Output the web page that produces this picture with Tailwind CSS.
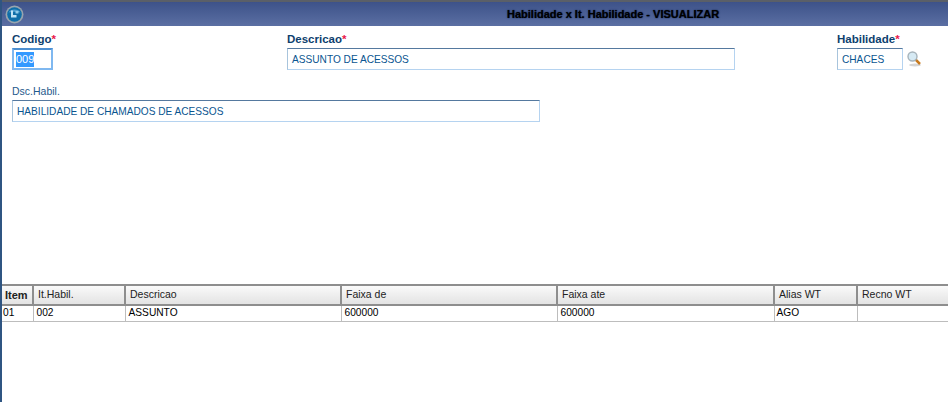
<!DOCTYPE html>
<html>
<head>
<meta charset="utf-8">
<script src="https://cdn.jsdelivr.net/npm/@tailwindcss/browser@4"></script>
</head>
<body class="m-0 bg-white">
<div class="w-[948px] h-[402px] overflow-hidden flex flex-col bg-white border-l-2 border-[#2f5582] font-['Liberation_Sans',Arial,sans-serif] text-[11px]">
  <header class="h-[26px] shrink-0 flex items-center relative border-t-2 border-[#5a5f68] bg-gradient-to-b from-[#3d5289] to-[#5b6fa3] -ml-[2px] pl-[5px]">
    <svg width="19" height="19" viewBox="0 0 19 19" class="shrink-0">
      <circle cx="9.500" cy="9.500" r="9" fill="#98a4ae"/>
      <circle cx="9.500" cy="9.500" r="7.300" fill="#0f6ea8"/>
      <path d="M3.500 7.500a6.500 5 0 0 1 12 0a12 5 0 0 0-12 0z" fill="#4f9fd0"/>
      <path d="M6 5.500h2v4.500h3.500v2.500H6z" fill="#bfe3f5"/>
      <path d="M10.500 6h3v2.500h-3z" fill="#8fcbe8"/>
    </svg>
    <div class="absolute left-[507px] top-[4px] text-[11px] leading-[16px] font-bold text-black [text-shadow:0_0_1px_#0a1a40,0_0_2px_#2a3a68] whitespace-nowrap">Habilidade x It. Habilidade - VISUALIZAR</div>
  </header>

  <form class="h-[258px] shrink-0 text-[#0a5590] pl-[10px]">
    <div class="flex pt-[7px]">
      <div class="w-[275px]">
        <label class="block h-[15px] leading-[13px] text-[11.500px] font-bold text-[#0e3f6e]">Codigo<span class="text-[#e8174b]">*</span></label>
        <div class="w-[41px] h-[22px] border-2 border-[#7fb8f0] border-t-[#4d8fd0] pl-[2px] flex items-center"><span class="bg-[#3399ff] text-white leading-[15px]">009</span></div>
      </div>
      <div class="w-[550px]">
        <label class="block h-[15px] leading-[13px] text-[11.500px] font-bold text-[#0e3f6e]">Descricao<span class="text-[#e8174b]">*</span></label>
        <div class="w-[448px] h-[22px] border border-[#b5d3f0] border-t-[#55799f] border-l-[#a8c4dc] pl-[4px] pt-px flex items-center text-[10.150px]">ASSUNTO DE ACESSOS</div>
      </div>
      <div>
        <label class="block h-[15px] leading-[13px] text-[11.500px] font-bold text-[#0e3f6e]">Habilidade<span class="text-[#e8174b]">*</span></label>
        <div class="flex items-center gap-[4px]">
          <div class="w-[66px] h-[22px] border border-[#b5d3f0] border-t-[#55799f] border-l-[#a8c4dc] pl-[4px] pt-px flex items-center text-[10.150px]">CHACES</div>
          <svg width="15" height="16" viewBox="0 0 15 16">
            <ellipse cx="8" cy="14" rx="6" ry="1.500" fill="#d5d5d5"/>
            <line x1="8.500" y1="8.500" x2="13" y2="13" stroke="#c87a1e" stroke-width="2.500"/>
            <circle cx="5.500" cy="5.500" r="4.500" fill="#d6eaf4" stroke="#a6b3bb" stroke-width="1.400"/>
          </svg>
        </div>
      </div>
    </div>
    <div class="mt-[15px]">
      <label class="block h-[15px] leading-[12px] text-[10.500px] text-[#1f5a8c]">Dsc.Habil.</label>
      <div class="w-[528px] h-[22px] border border-[#b5d3f0] border-t-[#55799f] border-l-[#a8c4dc] pl-[4px] pt-px flex items-center text-[10.150px]">HABILIDADE DE CHAMADOS DE ACESSOS</div>
    </div>
  </form>

  <table class="table-fixed border-collapse w-[946px] text-black text-[10.200px]">
    <colgroup><col class="w-[31px]"><col class="w-[92px]"><col class="w-[216px]"><col class="w-[216px]"><col class="w-[217px]"><col class="w-[83px]"><col class="w-[91px]"></colgroup>
    <thead>
      <tr class="h-[20px] bg-gradient-to-b from-[#fbfbfb] to-[#e2e2e2] text-[#222] text-[10.500px]">
        <th class="border-y-2 border-[#8e8e8e] text-left pl-[3px] font-bold text-[11px]">Item</th>
        <th class="border-y-2 border-[#8e8e8e] border-l-2 text-left pl-[4px] font-normal">It.Habil.</th>
        <th class="border-y-2 border-[#8e8e8e] border-l-2 text-left pl-[4px] font-normal">Descricao</th>
        <th class="border-y-2 border-[#8e8e8e] border-l-2 text-left pl-[4px] font-normal">Faixa de</th>
        <th class="border-y-2 border-[#8e8e8e] border-l-2 text-left pl-[4px] font-normal">Faixa ate</th>
        <th class="border-y-2 border-[#8e8e8e] border-l-2 text-left pl-[4px] font-normal">Alias WT</th>
        <th class="border-y-2 border-[#8e8e8e] border-l-2 text-left pl-[4px] font-normal">Recno WT</th>
      </tr>
    </thead>
    <tbody>
      <tr class="h-[16px] leading-[12px]">
        <td class="border-b border-[#bdbdbd] pl-px">01</td>
        <td class="border-b border-l border-[#bdbdbd] pl-[3px]">002</td>
        <td class="border-b border-l border-[#bdbdbd] pl-[3px]">ASSUNTO</td>
        <td class="border-b border-l border-[#bdbdbd] pl-[3px]">600000</td>
        <td class="border-b border-l border-[#bdbdbd] pl-[3px]">600000</td>
        <td class="border-b border-l border-[#bdbdbd] pl-[2px]">AGO</td>
        <td class="border-b border-l border-[#bdbdbd]"></td>
      </tr>
    </tbody>
  </table>
</div>
</body>
</html>
